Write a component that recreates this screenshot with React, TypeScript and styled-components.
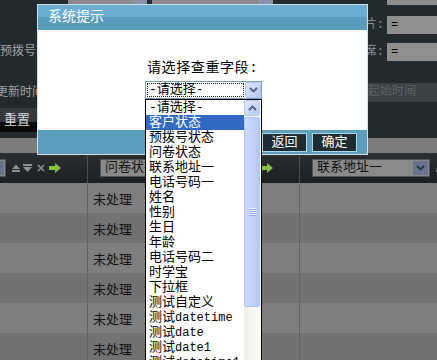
import React from "react";
import styled, { createGlobalStyle } from "styled-components";

const FONT = `"Liberation Mono", "Noto Sans CJK SC", monospace`;

const GlobalStyle = createGlobalStyle`
  html, body {
    margin: 0;
    padding: 0;
    background: #222a2e;
  }
  body {
    font-family: ${FONT};
  }
`;

const Page = styled.div`
  position: relative;
  width: 437px;
  height: 360px;
  overflow: hidden;
  background: #222a2e;
  font-family: ${FONT};
`;

/* ---------- background search form ---------- */

const Form = styled.div`
  display: flex;
  flex-direction: column;
  height: 138px;
  flex-shrink: 0;
`;

const FormRow = styled.div<{ $h: number; $top: number }>`
  display: flex;
  align-items: center;
  height: ${(p) => p.$h}px;
  margin-top: ${(p) => p.$top}px;
  flex-shrink: 0;
`;

const LeftCell = styled.div<{ $pad?: number }>`
  flex: 1;
  display: flex;
  align-items: center;
  gap: 5px;
  height: 100%;
  padding-left: ${(p) => p.$pad ?? 0}px;
`;

const RightCell = styled.div`
  display: flex;
  align-items: center;
  justify-content: flex-end;
  gap: 3px;
  height: 100%;
`;

const FieldLabel = styled.span<{ $shift?: number; $dim?: boolean }>`
  white-space: nowrap;
  font-size: 12px;
  line-height: 14px;
  color: ${(p) => (p.$dim ? "#8a9094" : "#a2a4a6")};
  margin-left: ${(p) => p.$shift ?? 0}px;
`;

const StubSelect = styled.div<{ $w: number }>`
  width: ${(p) => p.$w}px;
  height: 100%;
  display: flex;
  justify-content: flex-end;
  background: #898989;
  &::after {
    content: "";
    width: 15px;
    background: #8c90ab;
  }
`;

const DimInput = styled.div`
  width: 50px;
  height: 100%;
  box-sizing: border-box;
  background: #8e8e8e;
  color: #000;
  font-size: 12px;
  line-height: 18px;
  padding-left: 4px;
`;

const PlaceholderBox = styled.div`
  width: 72px;
  height: 100%;
  box-sizing: border-box;
  background: #3b4245;
  color: #5d6468;
  font-size: 12px;
  line-height: 19px;
  padding-left: 3px;
  white-space: nowrap;
`;

const ResetButton = styled.div`
  width: 60px;
  height: 100%;
  box-sizing: border-box;
  background: linear-gradient(#343a3d 0%, #30363a 58%, #0a0b0c 60%, #050505 100%);
  color: #d6d6d6;
  font-size: 13px;
  line-height: 26px;
  padding-left: 4px;
`;

/* ---------- background grid ---------- */

const Toolbar = styled.div`
  height: 15px;
  flex-shrink: 0;
  background: #7c7c7c;
`;

const GridRow = styled.div<{ $variant: "head" | "light" | "dark" }>`
  display: flex;
  height: 30px;
  flex-shrink: 0;
  margin-left: -124px;
  background: ${(p) =>
    p.$variant === "head"
      ? "linear-gradient(#2a2f32, #1b1f21)"
      : p.$variant === "light"
      ? "#7e7e7e"
      : "#727272"};
`;

const Cell = styled.div<{ $head?: boolean }>`
  width: 212px;
  flex-shrink: 0;
  box-sizing: border-box;
  display: flex;
  align-items: center;
  border-right: 1px solid ${(p) => (p.$head ? "#4a4f52" : "#626262")};
  padding-left: ${(p) => (p.$head ? 12 : 5)}px;
  font-size: 13px;
  color: #111;
  white-space: nowrap;
`;

const HeadSelect = styled.div`
  width: 118px;
  height: 18px;
  box-sizing: border-box;
  border: 1px solid #505456;
  background: #8a8a8a;
  display: flex;
  align-items: center;
  flex-shrink: 0;
`;

const HeadSelectText = styled.span`
  flex: 1;
  padding-left: 4px;
  font-size: 13px;
  line-height: 16px;
  color: #111;
  overflow: hidden;
`;

const HeadArrow = styled.div`
  width: 15px;
  height: 14px;
  margin-right: 1px;
  background: #687491;
  display: flex;
  align-items: center;
  justify-content: center;
`;

const IconGroup = styled.div`
  display: flex;
  align-items: center;
  margin-left: 6px;
  gap: 3px;
  svg {
    display: block;
    flex-shrink: 0;
  }
`;

/* ---------- dialog ---------- */

const Dialog = styled.div`
  position: absolute;
  left: 37px;
  top: 4px;
  width: 331px;
  height: 151px;
  box-sizing: border-box;
  border: 1px solid #cde2ec;
  background: #fff;
  display: flex;
  flex-direction: column;
  z-index: 1;
`;

const TitleBar = styled.div`
  height: 25px;
  flex-shrink: 0;
  background: linear-gradient(#6aafd3 0%, #6aafd3 48%, #5b9cba 50%, #5b9cba 100%);
  color: #fff;
  font-size: 14px;
  line-height: 25px;
  padding-left: 10px;
`;

const DialogBody = styled.div`
  flex: 1;
  display: flex;
  flex-direction: column;
  align-items: flex-start;
  padding: 30px 0 0 107px;
`;

const Prompt = styled.div`
  font-size: 14px;
  line-height: 17px;
  letter-spacing: 0.6px;
  padding-left: 2px;
  color: #000;
`;

const SelectBox = styled.div`
  margin-top: 4px;
  width: 117px;
  height: 18px;
  box-sizing: border-box;
  border: 1px solid #7f9db9;
  display: flex;
  align-items: stretch;
  background: #fff;
`;

const SelectValue = styled.div`
  flex: 1;
  margin: 1px;
  outline: 1px dotted #222;
  outline-offset: -1px;
  font-size: 13px;
  line-height: 14px;
  padding-left: 2px;
  color: #000;
  white-space: nowrap;
`;

const XpButton = styled.div<{ $h?: number }>`
  width: 16px;
  height: ${(p) => p.$h ?? 16}px;
  box-sizing: border-box;
  border: 1px solid #b4c8f2;
  border-radius: 2px;
  background: linear-gradient(135deg, #e2eafe 0%, #c6d5fb 60%, #b6c9f6 100%);
  display: flex;
  align-items: center;
  justify-content: center;
  flex-shrink: 0;
`;

const Footer = styled.div`
  height: 24px;
  flex-shrink: 0;
  background: #5c9dbb;
  display: flex;
  align-items: center;
  justify-content: flex-end;
  gap: 5px;
  padding-right: 10px;
`;

const FooterButton = styled.div`
  width: 45px;
  height: 19px;
  box-sizing: border-box;
  border: 1px solid #a8dbf2;
  background: #1f2c33;
  color: #fff;
  font-size: 13px;
  line-height: 17px;
  text-align: center;
`;

/* ---------- open dropdown ---------- */

const DropList = styled.div`
  position: absolute;
  left: 107px;
  top: 94px;
  width: 117px;
  height: 272px;
  box-sizing: border-box;
  border: 1px solid #000;
  background: #fff;
  display: flex;
  z-index: 2;
`;

const Items = styled.div`
  flex: 1;
  overflow: hidden;
`;

const Item = styled.div<{ $selected?: boolean }>`
  height: 15px;
  line-height: 15px;
  font-size: 13px;
  padding-left: 3px;
  white-space: nowrap;
  color: ${(p) => (p.$selected ? "#fff" : "#000")};
  background: ${(p) => (p.$selected ? "#316ac5" : "transparent")};
`;

const Scrollbar = styled.div`
  width: 17px;
  display: flex;
  flex-direction: column;
  align-items: flex-start;
  background: linear-gradient(to right, #f1efe6, #fdfdfb);
`;

const Thumb = styled.div`
  margin-top: 1px;
  width: 16px;
  height: 190px;
  box-sizing: border-box;
  border: 1px solid #b1c4f0;
  border-radius: 2px;
  background: linear-gradient(to right, #cddafd, #bfd0fb 60%, #b4c8f6);
  display: flex;
  align-items: center;
  justify-content: center;
`;

const Grip = styled.div`
  width: 7px;
  height: 8px;
  background: repeating-linear-gradient(#eef3fe 0 1px, #8fa6e2 1px 2px);
`;

const Mono = styled.span`
  font-size: 12px;
`;

const Chevron = ({ up, color = "#4d6185" }: { up?: boolean; color?: string }) => (
  <svg width="9" height="6" viewBox="0 0 9 6">
    <path
      d={up ? "M1 5 L4.5 1.5 L8 5" : "M1 1 L4.5 4.5 L8 1"}
      fill="none"
      stroke={color}
      strokeWidth="1.8"
    />
  </svg>
);

const SortIcons = () => (
  <IconGroup>
    <svg width="8" height="8" viewBox="0 0 8 8">
      <polygon points="0,5 4,0.5 8,5" fill="#8f8f8f" />
      <rect x="0" y="6" width="8" height="2" fill="#8f8f8f" />
    </svg>
    <svg width="9" height="8" viewBox="0 0 9 8">
      <rect x="0" y="0" width="9" height="2" fill="#8f8f8f" />
      <polygon points="0,3 9,3 4.5,8" fill="#8f8f8f" />
    </svg>
    <svg width="8" height="8" viewBox="0 0 8 8" style={{ marginLeft: 2 }}>
      <path d="M1 1 L7 7 M7 1 L1 7" stroke="#8f8f8f" strokeWidth="1.7" />
    </svg>
    <svg width="12" height="10" viewBox="0 0 12 10" style={{ marginLeft: 1 }}>
      <polygon points="0,3 6,3 6,0 12,5 6,10 6,7 0,7" fill="#86bd3a" />
      <path d="M1 4 H5 M1 6 H5" stroke="#a6d65a" strokeWidth="0.8" strokeDasharray="1 1" />
    </svg>
  </IconGroup>
);

const HeaderCell = ({ label }: { label: string }) => (
  <Cell $head>
    <HeadSelect>
      <HeadSelectText>{label}</HeadSelectText>
      <HeadArrow>
        <Chevron color="#27344c" />
      </HeadArrow>
    </HeadSelect>
    <SortIcons />
  </Cell>
);

const options: React.ReactNode[] = [
  "-请选择-",
  "客户状态",
  "预拨号状态",
  "问卷状态",
  "联系地址一",
  "电话号码一",
  "姓名",
  "性别",
  "生日",
  "年龄",
  "电话号码二",
  "时学宝",
  "下拉框",
  "测试自定义",
  <>测试<Mono>datetime</Mono></>,
  <>测试<Mono>date</Mono></>,
  <>测试<Mono>date1</Mono></>,
  <>测试<Mono>datetime1</Mono></>,
];

const rows: Array<"light" | "dark"> = ["light", "dark", "light", "dark", "light", "dark"];

export default function App() {
  return (
    <Page>
      <GlobalStyle />

      <Form>
        <FormRow $h={18} $top={-13}>
          <LeftCell $pad={68}>
            <StubSelect $w={79} />
            <StubSelect $w={121} />
          </LeftCell>
          <RightCell>
            <DimInput />
          </RightCell>
        </FormRow>
        <FormRow $h={18} $top={11}>
          <LeftCell />
          <RightCell>
            <FieldLabel $dim>图片:</FieldLabel>
            <DimInput>=</DimInput>
          </RightCell>
        </FormRow>
        <FormRow $h={18} $top={9}>
          <LeftCell>
            <FieldLabel>预拨号状态:</FieldLabel>
          </LeftCell>
          <RightCell>
            <FieldLabel $dim>坐席:</FieldLabel>
            <DimInput>=</DimInput>
          </RightCell>
        </FormRow>
        <FormRow $h={19} $top={22}>
          <LeftCell>
            <FieldLabel $shift={-4}>更新时间:</FieldLabel>
          </LeftCell>
          <RightCell>
            <PlaceholderBox>起始时间</PlaceholderBox>
          </RightCell>
        </FormRow>
        <FormRow $h={24} $top={6}>
          <LeftCell>
            <ResetButton>重置</ResetButton>
          </LeftCell>
        </FormRow>
      </Form>

      <Toolbar />
      <GridRow $variant="head">
        <HeaderCell label="客户状态" />
        <HeaderCell label="问卷状态" />
        <HeaderCell label="联系地址一" />
      </GridRow>
      {rows.map((v, i) => (
        <GridRow key={i} $variant={v}>
          <Cell />
          <Cell>未处理</Cell>
          <Cell />
        </GridRow>
      ))}

      <Dialog>
        <TitleBar>系统提示</TitleBar>
        <DialogBody>
          <Prompt>请选择查重字段:</Prompt>
          <SelectBox>
            <SelectValue>-请选择-</SelectValue>
            <XpButton>
              <Chevron />
            </XpButton>
          </SelectBox>
        </DialogBody>
        <Footer>
          <FooterButton>返回</FooterButton>
          <FooterButton>确定</FooterButton>
        </Footer>

        <DropList>
          <Items>
            {options.map((o, i) => (
              <Item key={i} $selected={i === 1}>
                {o}
              </Item>
            ))}
          </Items>
          <Scrollbar>
            <XpButton>
              <Chevron up />
            </XpButton>
            <Thumb>
              <Grip />
            </Thumb>
          </Scrollbar>
        </DropList>
      </Dialog>
    </Page>
  );
}
